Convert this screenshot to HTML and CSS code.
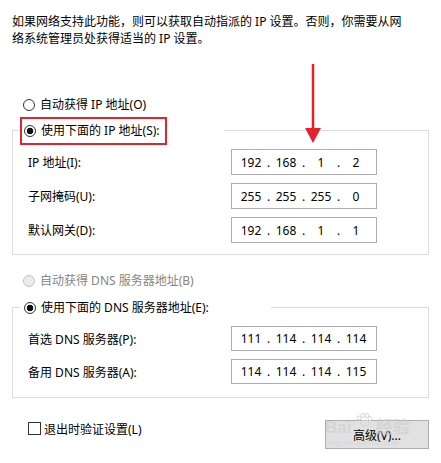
FILE: index.html
```html
<!DOCTYPE html>
<html lang="zh-CN">
<head>
    <meta charset="UTF-8">
    <title>IP 设置</title>
    <link rel="stylesheet" href="styles.css">
</head>
<body>
    <div class="dialog">
        <p class="intro">如果网络支持此功能，则可以获取自动指派的 IP 设置。否则，你需要从网<br>络系统管理员处获得适当的 IP 设置。</p>

        <!-- IP address -->
        <label class="option option-top"><input type="radio" name="ip"> 自动获得 IP 地址(O)</label>

        <div class="group group-ip">
            <div class="group-head">
                <div class="legend">
                    <label class="option marked"><input type="radio" name="ip" checked> 使用下面的 IP 地址(S):</label>
                </div>
            </div>
            <div class="group-body">
                <div class="field">
                    <span>IP 地址(I):</span>
                    <div class="ip-box"><span>192</span><i>.</i><span>168</span><i>.</i><span>1</span><i>.</i><span>2</span></div>
                </div>
                <div class="field">
                    <span>子网掩码(U):</span>
                    <div class="ip-box"><span>255</span><i>.</i><span>255</span><i>.</i><span>255</span><i>.</i><span>0</span></div>
                </div>
                <div class="field">
                    <span>默认网关(D):</span>
                    <div class="ip-box"><span>192</span><i>.</i><span>168</span><i>.</i><span>1</span><i>.</i><span>1</span></div>
                </div>
            </div>
        </div>

        <!-- DNS -->
        <label class="option option-mid disabled"><input type="radio" name="dns" disabled> 自动获得 DNS 服务器地址(B)</label>

        <div class="group group-dns">
            <div class="group-head">
                <div class="legend">
                    <label class="option"><input type="radio" name="dns" checked> 使用下面的 DNS 服务器地址(E):</label>
                </div>
            </div>
            <div class="group-body">
                <div class="field">
                    <span>首选 DNS 服务器(P):</span>
                    <div class="ip-box"><span>111</span><i>.</i><span>114</span><i>.</i><span>114</span><i>.</i><span>114</span></div>
                </div>
                <div class="field">
                    <span>备用 DNS 服务器(A):</span>
                    <div class="ip-box"><span>114</span><i>.</i><span>114</span><i>.</i><span>114</span><i>.</i><span>115</span></div>
                </div>
            </div>
        </div>

        <div class="footer">
            <label class="check"><input type="checkbox"> 退出时验证设置(L)</label>
            <button type="button" class="btn">高级(V)...</button>
        </div>

        <!-- annotation arrow -->
        <svg class="arrow" width="30" height="90" viewBox="0 0 30 90">
            <line x1="13" y1="4" x2="13" y2="70" stroke="#e5222b" stroke-width="2.5"/>
            <polygon points="5,68 21,68 13,83" fill="#e5222b"/>
        </svg>

        <div class="watermark">
            <span class="wm-big">Bai</span>
            <svg class="paw" width="18" height="14" viewBox="0 0 18 14">
                <circle cx="4" cy="5" r="2" fill="none" stroke="#d6d6d6"/>
                <circle cx="8" cy="2.5" r="2" fill="none" stroke="#d6d6d6"/>
                <circle cx="12" cy="2.5" r="2" fill="none" stroke="#d6d6d6"/>
                <circle cx="15" cy="5.5" r="2" fill="none" stroke="#d6d6d6"/>
                <ellipse cx="10" cy="10" rx="4" ry="3" fill="none" stroke="#d6d6d6"/>
            </svg>
            <span class="wm-big">经验</span>
            <div class="wm-small">jingyan.baidu.com</div>
        </div>
    </div>
</body>
</html>
```

FILE: styles.css
```css
/* reset */
* {
    margin: 0;
    padding: 0;
    box-sizing: border-box;
}

body {
    background: #fff;
    font-family: "Noto Sans", "Noto Sans CJK SC", sans-serif;
    font-size: 12px;
    color: #000;
}

.dialog {
    position: relative;
    width: 441px;
    height: 463px;
    padding: 13px 12px 0;
}

.intro {
    line-height: 17px;
    white-space: nowrap;
}

/* radio rows */
.option {
    display: flex;
    align-items: center;
    gap: 5px;
    height: 16px;
    line-height: 16px;
    white-space: nowrap;
}

.option input {
    appearance: none;
    flex: none;
    width: 12px;
    height: 12px;
    border: 1px solid #333;
    border-radius: 50%;
    background: #fff;
}

.option input:checked {
    background: radial-gradient(circle, #111 0 3px, #fff 3.6px);
}

.option input:disabled {
    border-color: #c2c2c2;
    background: #ececec;
}

.option.disabled {
    color: #858585;
}

.option-top {
    margin: 50px 0 0 11px;
}

.option-mid {
    margin: 18px 0 0 11px;
}

/* red annotation box round the legend */
.marked {
    width: 147px;
    height: 28px;
    padding-left: 2px;
    border: 2px solid #e3242b;
}

/* group boxes */
.group {
    width: 417px;
}

.group-ip {
    margin-top: 4px;
}

.group-dns {
    margin-top: 11px;
}

.group-head {
    display: flex;
}

.group-ip .group-head {
    height: 28px;
}

.group-dns .group-head {
    height: 16px;
}

.group-head::before,
.group-head::after {
    content: "";
    height: 50%;
    align-self: flex-end;
    border-top: 1px solid #dcdcdc;
}

.group-head::before {
    width: 7px;
    border-left: 1px solid #dcdcdc;
}

.group-head::after {
    flex: 1;
    border-right: 1px solid #dcdcdc;
}

.legend {
    display: flex;
    align-items: center;
}

.group-ip .legend {
    width: 204px;
}

.group-dns .legend {
    width: 251px;
    padding-left: 4px;
}

.group-body {
    display: flex;
    flex-direction: column;
    gap: 8px;
    border: 1px solid #dcdcdc;
    border-top: none;
}

.group-ip .group-body {
    padding: 4px 0 11px 15px;
}

.group-dns .group-body {
    padding: 10px 0 13px 15px;
}

.field {
    display: grid;
    grid-template-columns: 203px 146px;
    align-items: center;
    white-space: nowrap;
}

.ip-box {
    display: flex;
    align-items: center;
    height: 26px;
    padding-left: 4px;
    border: 1px solid #abadb3;
}

.group-dns .ip-box {
    height: 25px;
}

.ip-box span {
    width: 30px;
    text-align: center;
}

.ip-box i {
    width: 5px;
    font-style: normal;
    text-align: center;
}

/* bottom row */
.footer {
    display: flex;
    justify-content: space-between;
    align-items: flex-start;
    margin-top: 22px;
    padding-left: 16px;
}

.check {
    display: flex;
    align-items: center;
    gap: 3px;
    height: 13px;
    margin-top: 2px;
    white-space: nowrap;
}

.check input {
    appearance: none;
    width: 13px;
    height: 13px;
    border: 1px solid #333;
    background: #fff;
}

.btn {
    width: 104px;
    height: 29px;
    border: 1px solid #adadad;
    background: #e1e1e1;
    font: inherit;
    color: #000;
}

/* overlays */
.arrow {
    position: absolute;
    left: 300px;
    top: 60px;
}

.watermark {
    position: absolute;
    left: 325px;
    top: 413px;
    width: 110px;
    pointer-events: none;
    color: rgba(205, 205, 205, 0.6);
}

.wm-big {
    font: bold 17px "Liberation Sans", "Noto Sans CJK SC", sans-serif;
}

.paw {
    vertical-align: top;
}

.wm-small {
    font: 8px "Liberation Sans", sans-serif;
    letter-spacing: 0.5px;
}
```
